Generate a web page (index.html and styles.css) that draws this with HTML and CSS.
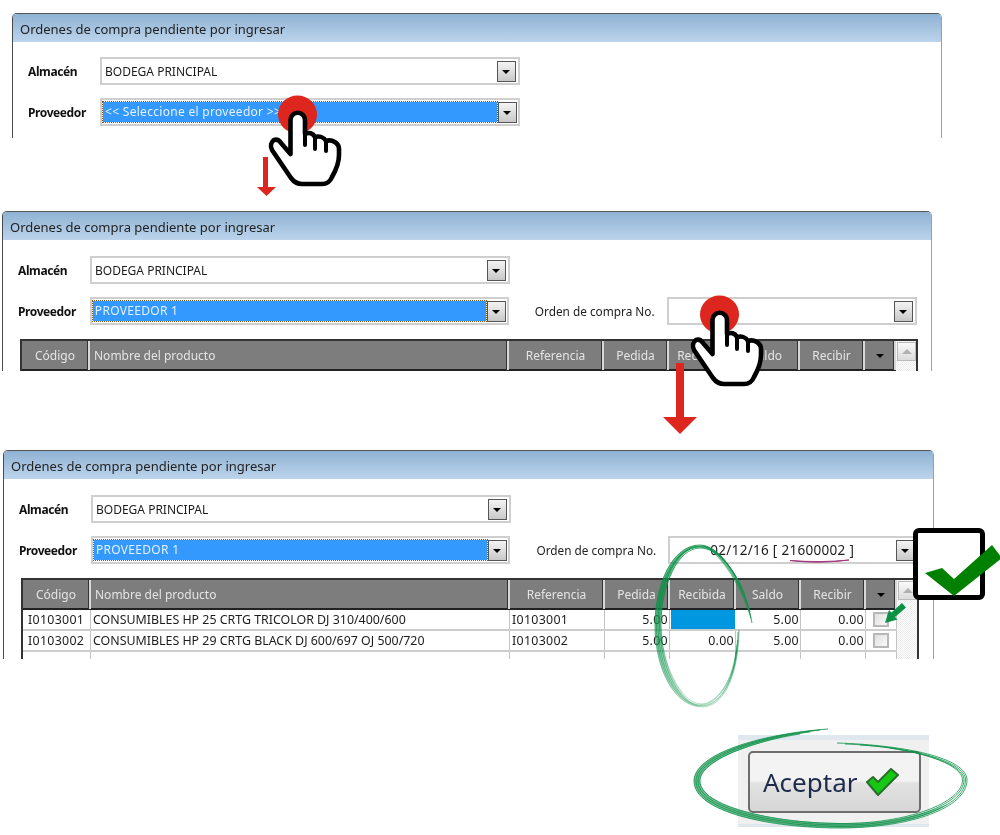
FILE: index.html
```html
<!DOCTYPE html>
<html lang="es">
<head>
  <meta charset="UTF-8">
  <title>Ordenes de compra pendiente por ingresar</title>
  <link rel="stylesheet" href="styles.css">
</head>
<body>
  <main class="canvas">

    <!-- paso 1 -->
    <section class="window win-one">
      <h2 class="win-title">Ordenes de compra pendiente por ingresar</h2>
      <div class="win-form">
        <div class="field-row">
          <label class="field-label">Almacén</label>
          <div class="combo"><span class="combo-value">BODEGA PRINCIPAL</span><span class="combo-btn"></span></div>
        </div>
        <div class="field-row">
          <label class="field-label">Proveedor</label>
          <div class="combo is-selected"><span class="combo-value">&lt;&lt; Seleccione el proveedor &gt;&gt;</span><span class="combo-btn"></span></div>
        </div>
      </div>
    </section>

    <!-- paso 2 -->
    <section class="window win-two">
      <h2 class="win-title">Ordenes de compra pendiente por ingresar</h2>
      <div class="win-form">
        <div class="field-row">
          <label class="field-label">Almacén</label>
          <div class="combo"><span class="combo-value">BODEGA PRINCIPAL</span><span class="combo-btn"></span></div>
        </div>
        <div class="field-row">
          <label class="field-label">Proveedor</label>
          <div class="combo is-selected"><span class="combo-value">PROVEEDOR 1</span><span class="combo-btn"></span></div>
          <label class="order-label">Orden de compra No.</label>
          <div class="combo combo-order"><span class="combo-value"></span><span class="combo-btn"></span></div>
        </div>
        <div class="grid">
          <div class="grid-cols">
            <div class="grid-row grid-head">
              <span>Código</span><span class="left">Nombre del producto</span><span>Referencia</span><span>Pedida</span><span>Recibida</span><span>Saldo</span><span>Recibir</span><span class="head-caret"></span>
            </div>
          </div>
          <div class="scrollbar"><span class="scroll-up"></span></div>
        </div>
      </div>
    </section>

    <!-- paso 3 -->
    <section class="window win-three">
      <h2 class="win-title">Ordenes de compra pendiente por ingresar</h2>
      <div class="win-form">
        <div class="field-row">
          <label class="field-label">Almacén</label>
          <div class="combo"><span class="combo-value">BODEGA PRINCIPAL</span><span class="combo-btn"></span></div>
        </div>
        <div class="field-row">
          <label class="field-label">Proveedor</label>
          <div class="combo is-selected"><span class="combo-value">PROVEEDOR 1</span><span class="combo-btn"></span></div>
          <label class="order-label">Orden de compra No.</label>
          <div class="combo combo-order"><span class="combo-value order-value">02/12/16 [ 21600002 ]</span><span class="combo-btn"></span></div>
        </div>
        <div class="grid">
          <div class="grid-cols">
            <div class="grid-row grid-head">
              <span>Código</span><span class="left">Nombre del producto</span><span>Referencia</span><span>Pedida</span><span>Recibida</span><span>Saldo</span><span>Recibir</span><span class="head-caret"></span>
            </div>
            <div class="grid-row grid-data">
              <span class="code">I0103001</span><span>CONSUMIBLES HP 25 CRTG TRICOLOR DJ 310/400/600</span><span class="code-ref">I0103001</span><span class="num">5.00</span><span class="num cell-active"></span><span class="num">5.00</span><span class="num">0.00</span><span class="check-cell"><i class="check"></i></span>
            </div>
            <div class="grid-row grid-data">
              <span class="code">I0103002</span><span>CONSUMIBLES HP 29 CRTG BLACK DJ 600/697 OJ 500/720</span><span class="code-ref">I0103002</span><span class="num">5.00</span><span class="num">0.00</span><span class="num">5.00</span><span class="num">0.00</span><span class="check-cell"><i class="check"></i></span>
            </div>
            <div class="grid-row grid-data">
              <span></span><span></span><span></span><span></span><span></span><span></span><span></span><span></span>
            </div>
          </div>
          <div class="scrollbar"><span class="scroll-up"></span></div>
        </div>
      </div>
    </section>

    <!-- recorte del boton -->
    <div class="accept-crop">
      <button class="accept-btn" type="button">
        Aceptar
        <svg class="accept-icon" viewBox="0 0 34 28" width="34" height="28">
          <path d="M2 14 L8 9 L13 14 L26 1 L33 7 L13 27 Z" fill="#14c814" stroke="#2c6e2c" stroke-width="2" stroke-linejoin="round"/>
        </svg>
      </button>
    </div>

    <!-- anotaciones -->
    <svg class="marks" viewBox="0 0 1000 835" width="1000" height="835">
      <defs>
        <g id="hand">
          <ellipse cx="27.5" cy="2.5" rx="19.5" ry="19" fill="#dd261e"/>
          <path d="M20.5 42 V8 A7.2 7.2 0 0 1 35 8 V22 C39 20 43 21 45 25 C49 24 54 25 56 29 C62 27 69 31 69 37 V43 C69 51 66 58 62 65 C60 70 56 72 52 72 H32 C28 72 24 70 21 66 L2 38 C0 34 1 30 4 28 C7 27 9 28 11 31 Z" fill="#fff" stroke="#000" stroke-width="4.6" stroke-linejoin="round"/>
          <path d="M35 21 V33 M45 25 V37 M56 29 V39" fill="none" stroke="#000" stroke-width="4" stroke-linecap="round"/>
        </g>
        <linearGradient id="ovalFade" gradientUnits="userSpaceOnUse" x1="0" y1="610" x2="0" y2="710">
          <stop offset="0" stop-color="#0d9148"/>
          <stop offset="1" stop-color="#0d9148" stop-opacity="0.35"/>
        </linearGradient>
      </defs>

      <use href="#hand" x="270" y="112"/>
      <use href="#hand" x="692" y="312"/>

      <path d="M263 157 H268 V187 H276 L266.500 196 L257 187 H263 Z" fill="#dd261e"/>
      <path d="M676 363 H684 V417 H697 L680 434 L663 417 H676 Z" fill="#dd261e"/>

      <!-- subrayado -->
      <path d="M790 560.500 C810 562 830 562 849 560 C830 562.500 810 563 790 560.500 Z" fill="#a4387e" stroke="#a4387e" stroke-width="1"/>

      <!-- ovalo Recibida -->
      <g class="oval oval-faded">
        <path d="M752 623 C745 585 722 545 700 545 C672 545 655 585 655 625 C655 670 675 707 702 707 C722 707 738 680 739 630"/>
        <path d="M751 618 C743 583 722 546 701 546 C674 546 656.500 585 656.500 625 C656.500 668 676 706 702 706 C721 706 737 680 738 632"/>
        <path d="M750 612 C741 581 721 546 700 546.500 C675 547 658 585 658 625 C658 667 677 705 701 705.500 C720 706 736 680 737.500 640"/>
        <path d="M745 595 C736 572 718 547 699 547 C676 547 659 585 659.500 625 C660 665 678 704 700 705 C718 705 735 680 737 645"/>
        <path d="M740 585 C732 566 716 548 700 548 C678 548 661 585 661 625 C661 663 680 703 701 704 C716 704 733 682 736 650"/>
      </g>
      <path class="oval-fill oval-fill-faded" d="M700 545 C672 545 655 585 655 625 C655 670 675 707 702 707 C680 703 661 665 661 625 C661 585 678 549 700 545 C722 545 745 585 752 623 C743 590 720 550 700 545 Z"/>

      <!-- ovalo Aceptar -->
      <g class="oval">
        <path d="M828 729 C760 734 694 754 694 781 C694 812 770 828 840 828 C910 828 967 808 967 780 C967 758 905 745 837 743"/>
        <path d="M820 730 C758 736 696 756 696 781 C696 810 770 826 840 826.500 C910 827 965.500 806 965.500 780 C965.500 760 905 746 845 744"/>
        <path d="M810 732 C756 738 698 758 698 781 C698 808 770 824.500 840 825 C908 825.500 964 804 964 780 C964 762 910 748 860 745"/>
        <path d="M800 734 C754 741 700 760 700 781 C700 806 772 823 840 823.500 C906 824 962.500 803 962.500 780 C962.500 765 925 753 890 748"/>
      </g>
      <path class="oval-fill" d="M828 729 C760 734 694 754 694 781 C694 812 770 828 840 828 C880 828 925 820 948 804 C915 818 878 824 840 823 C772 823 700 806 700 781 C700 760 760 738 828 729 Z"/>

      <!-- flecha casilla -->
      <path d="M902 603 L906 607.500 L895 617 L897.500 619.500 L885 623 L889 610 L891.500 612.500 Z" fill="#0a9146"/>
    </svg>

    <!-- casilla grande -->
    <div class="big-check">
      <svg viewBox="0 0 90 75" width="90" height="75">
        <path d="M10 39 L27 34 L39 45 L77 11 L87 24 L39 62 Z" fill="#008000"/>
      </svg>
    </div>

  </main>
</body>
</html>
```

FILE: styles.css
```css
* {
  box-sizing: border-box;
}

body {
  margin: 0;
  background-color: #fff;
  font-family: "Noto Sans", sans-serif;
  color: #1c1c1c;
}

.canvas {
  position: relative;
  width: 1000px;
  height: 835px;
  overflow: hidden;
  background-color: #fff;
}

/* ventanas */
.window {
  position: absolute;
  overflow: hidden;
  background-color: #fff;
  border-left: 1px solid #4a4a4a;
  border-right: 1px solid #59b3e6;
  border-top: 1px solid #555;
  border-radius: 5px 5px 0 0;
  filter: blur(0.3px);
}

.win-one {
  left: 12px;
  top: 13px;
  width: 930px;
  height: 125px;
}

.win-two {
  left: 2px;
  top: 211px;
  width: 930px;
  height: 160px;
}

.win-three {
  left: 3px;
  top: 450px;
  width: 931px;
  height: 209px;
}

.win-title {
  margin: 0;
  height: 28px;
  padding-left: 7px;
  font-size: 13px;
  font-weight: normal;
  line-height: 30px;
  color: #222;
  background: linear-gradient(#8fb2d3, #bcd4ec);
}

.win-form {
  display: flex;
  flex-direction: column;
  gap: 13px;
  padding: 16px 14px 0 15px;
}

.win-one .win-form {
  padding-top: 15px;
}

.field-row {
  display: flex;
  align-items: center;
}

.field-label {
  width: 72px;
  font-size: 12px;
  font-weight: bold;
  color: #111;
  letter-spacing: -0.4px;
}

.order-label {
  width: 132px;
  margin-left: 26px;
  font-size: 11.8px;
  color: #222;
}

/* combos */
.combo {
  display: flex;
  align-items: center;
  justify-content: space-between;
  width: 420px;
  height: 28px;
  padding: 2px;
  border: 2px solid #cfcfcf;
  background-color: #fff;
}

.combo-value {
  padding-left: 1px;
  font-size: 12px;
  white-space: nowrap;
}

.combo-btn {
  position: relative;
  flex: none;
  width: 19px;
  height: 21px;
  margin-left: auto;
  border: 1px solid #555;
  background: linear-gradient(#f4f4f4, #c8c8c8);
}

.combo-btn::after {
  content: "";
  position: absolute;
  left: 4px;
  top: 8px;
  border-left: 4px solid transparent;
  border-right: 4px solid transparent;
  border-top: 4px solid #000;
}

.combo.is-selected {
  padding: 1px;
}

.combo.is-selected .combo-value {
  flex: 1;
  height: 20px;
  margin-right: 1px;
  padding-left: 2px;
  line-height: 19px;
  letter-spacing: 0.3px;
  color: #e4f1ff;
  background-color: #3399ff;
  outline: 1px dotted #8a5a1c;
}

.combo-order {
  width: 251px;
}

.combo .order-value {
  padding-left: 38px;
  font-size: 13.5px;
  letter-spacing: 0.3px;
}

/* tabla */
.grid {
  display: flex;
  width: 898px;
  margin: 1px 0 0 2px;
  border-top: 2px solid #333;
  border-left: 2px solid #333;
}

.grid-cols {
  width: 874px;
}

.grid-row {
  display: grid;
  grid-template-columns: 68px 419px 95px 65px 66px 65px 65px 31px;
}

.grid-head {
  height: 30px;
  border-bottom: 2px solid #222;
  background-color: #7d7d7d;
}

.grid-head span {
  border-right: 2px solid #d8d8d8;
  font-size: 12px;
  line-height: 29px;
  text-align: center;
  color: #e4e4e4;
  box-shadow: inset -1px 0 0 #333;
}

.grid-head .left {
  padding-left: 4px;
  text-align: left;
}

.head-caret {
  position: relative;
}

.head-caret::after {
  content: "";
  position: absolute;
  left: 11px;
  top: 13px;
  border-left: 4px solid transparent;
  border-right: 4px solid transparent;
  border-top: 4px solid #000;
}

.grid-data {
  height: 21px;
  border-bottom: 2px solid #cdcdcd;
}

.grid-data span {
  padding: 0 2px 0 2px;
  overflow: hidden;
  border-right: 1px solid #c4c4c4;
  font-size: 12.4px;
  line-height: 19px;
  white-space: nowrap;
}

.grid-data .code,
.grid-data .code-ref {
  letter-spacing: 0.3px;
}

.grid-data .code {
  padding-left: 5px;
}

.grid-data .num {
  padding-right: 1px;
  letter-spacing: 0.3px;
  text-align: right;
}

.grid-data .cell-active {
  margin: 0 1px 0 1px;
  background-color: #0096e0;
  border-right: 0;
}

.grid-data .check-cell {
  display: flex;
  align-items: center;
  justify-content: center;
  padding: 0;
}

.check {
  display: block;
  width: 16px;
  height: 15px;
  border: 2px solid #b8b8b8;
  background: linear-gradient(135deg, #e0e0e0, #fafafa);
}

.scrollbar {
  width: 22px;
  height: 200px;
  border-right: 2px solid #333;
  background-color: #f6f6f6;
  background-image: repeating-conic-gradient(#ececec 0 25%, #fff 0 50%);
  background-size: 2px 2px;
}

.scroll-up {
  position: relative;
  display: block;
  height: 19px;
  margin: 1px 0 0 1px;
  border: 1px solid #bbb;
  background: linear-gradient(#fafafa, #dcdcdc);
}

.scroll-up::after {
  content: "";
  position: absolute;
  left: 4px;
  top: 6px;
  border-left: 5px solid transparent;
  border-right: 5px solid transparent;
  border-bottom: 5px solid #b0b0b0;
}

/* recorte del boton Aceptar */
.accept-crop {
  position: absolute;
  left: 738px;
  top: 735px;
  width: 191px;
  height: 92px;
  padding: 16px 8px 14px 10px;
  background-color: #f0f0f0;
  border-top: 5px solid #dfe8ef;
  border-bottom: 3px solid #dfe8ef;
  filter: blur(0.7px);
}

.accept-btn {
  display: flex;
  align-items: center;
  gap: 8px;
  width: 173px;
  height: 62px;
  margin-top: -5px;
  padding: 0 0 0 13px;
  border: 2px solid #6e6e6e;
  border-radius: 5px;
  font-family: "Noto Sans", sans-serif;
  font-size: 26px;
  color: #1d2a4a;
  background: linear-gradient(#f3f3f3 0 48%, #e2e2e2 52%, #d6d6d6);
  cursor: pointer;
}

.accept-icon {
  flex: none;
}

/* anotaciones encima */
.marks {
  position: absolute;
  left: 0;
  top: 0;
  pointer-events: none;
}

.oval path {
  fill: none;
  stroke: #0d9148;
  stroke-width: 0.8;
}

.oval-faded path {
  stroke: url(#ovalFade);
}

.oval-fill {
  fill: #0d9148;
  opacity: 0.6;
}

.oval-fill-faded {
  fill: url(#ovalFade);
}

.big-check {
  position: absolute;
  left: 913px;
  top: 528px;
  width: 72px;
  height: 72px;
  border: 5px solid #000;
  border-radius: 6px;
  background-color: #fff;
}

.big-check svg {
  position: absolute;
  left: -3px;
  top: 1px;
  overflow: visible;
}
```
